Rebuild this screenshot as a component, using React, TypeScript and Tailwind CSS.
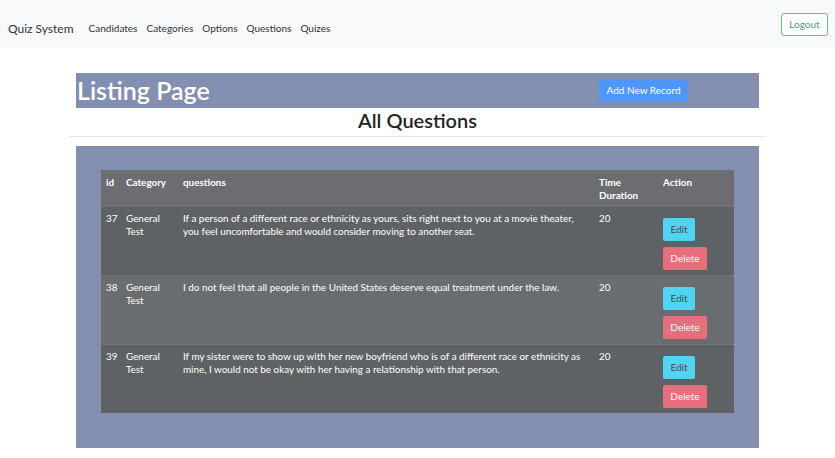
import React from "react";

const rows = [
  {
    id: 37,
    q: "If a person of a different race or ethnicity as yours, sits right next to you at a movie theater, you feel uncomfortable and would consider moving to another seat.",
    bg: "bg-[#5f6265]",
  },
  {
    id: 38,
    q: "I do not feel that all people in the United States deserve equal treatment under the law.",
    bg: "bg-[#6a6d70]",
  },
  {
    id: 39,
    q: "If my sister were to show up with her new boyfriend who is of a different race or ethnicity as mine, I would not be okay with her having a relationship with that person.",
    bg: "bg-[#5f6265]",
  },
];

export default function App() {
  return (
    <div className="w-[835px] h-[458px] bg-white overflow-hidden text-[#212529]" style={{ fontFamily: 'Lato, "Noto Sans", sans-serif' }}>
      <nav className="h-[48px] bg-[#f8f9fa] flex items-center pl-[8px] pr-[7px]">
        <div className="flex items-center mt-[9px]">
          <span className="text-[12px] text-[#333] mr-[15px]">Quiz System</span>
          <div className="flex gap-[9px] text-[10px] text-[#333]">
            <span>Candidates</span>
            <span>Categories</span>
            <span>Options</span>
            <span>Questions</span>
            <span>Quizes</span>
          </div>
        </div>
        <button className="ml-auto h-[23px] w-[47px] border border-[#6cbf95] rounded-[3px] text-[10px] text-[#4f9a8c] bg-white">
          Logout
        </button>
      </nav>

      <div className="mt-[25px] mx-auto w-[683px] h-[35px] bg-[#828fb0] flex items-center">
        <h1 className="w-[523px] text-[25px] font-semibold text-white leading-none pl-[1px]">Listing Page</h1>
        <button className="h-[22px] w-[89px] bg-[#5096f9] text-white text-[10px] rounded-[3px]">Add New Record</button>
      </div>
      <h2 className="text-center text-[20px] font-semibold leading-[24px] text-[#212529]">All Questions</h2>
      <div className="mx-auto w-[697px] border-t border-[#e6e6e6] mt-[4px]" />

      <div className="mt-[9px] mx-auto w-[683px] h-[302px] bg-[#828fb0] pt-[24px] px-[25px]">
        <table className="w-[633px] table-fixed border-collapse text-[9.9px] leading-[13px] text-white">
          <colgroup>
            <col className="w-[20px]" />
            <col className="w-[57px]" />
            <col className="w-[416px]" />
            <col className="w-[64px]" />
            <col className="w-[76px]" />
          </colgroup>
          <thead>
            <tr className="bg-[#6b6d70] h-[36px] border-b border-[#707376]">
              <th className="text-left align-top font-bold pl-[5px] pt-[6px]">id</th>
              <th className="text-left align-top font-bold pl-[5px] pt-[6px]">Category</th>
              <th className="text-left align-top font-bold pl-[5px] pt-[6px]">questions</th>
              <th className="text-left align-top font-bold pl-[5px] pt-[6px]">Time Duration</th>
              <th className="text-left align-top font-bold pl-[5px] pt-[6px]">Action</th>
            </tr>
          </thead>
          <tbody>
            {rows.map((r) => (
              <tr key={r.id} className={`${r.bg} h-[69px] border-t border-[#707376]`}>
                <td className="align-top pl-[5px] pt-[5px]">{r.id}</td>
                <td className="align-top pl-[5px] pt-[5px]">General Test</td>
                <td className="align-top pl-[5px] pr-[5px] pt-[5px]">{r.q}</td>
                <td className="align-top pl-[5px] pt-[5px]">20</td>
                <td className="align-top pl-[5px] pt-[11px] pb-[5px]">
                  <div className="flex flex-col items-start gap-[6px]">
                    <button className="h-[23px] w-[32px] bg-[#4fd5f1] text-[#4a4a4a] text-[10px] rounded-[2px]">Edit</button>
                    <button className="h-[23px] w-[44px] bg-[#e66f7b] text-white text-[10px] rounded-[2px]">Delete</button>
                  </div>
                </td>
              </tr>
            ))}
          </tbody>
        </table>
      </div>
    </div>
  );
}
